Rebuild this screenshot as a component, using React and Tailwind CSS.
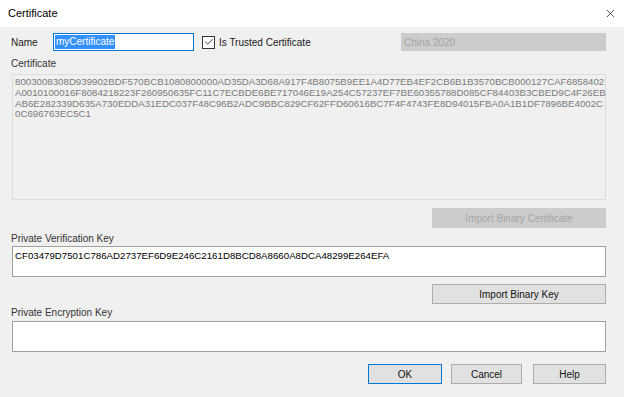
import { Check, ChevronDown, X } from "lucide-react"

const certLines = [
  "8003008308D939902BDF570BCB1080800000AD35DA3D68A917F4B8075B9EE1A4D77EB4EF2CB6B1B3570BCB000127CAF6858402",
  "A0010100016F8084218223F260950635FC11C7ECBDE6BE717046E19A254C57237EF7BE60355788D085CF84403B3CBED9C4F26EB",
  "AB6E282339D635A730EDDA31EDC037F48C96B2ADC9BBC829CF62FFD60616BC7F4F4743FE8D94015FBA0A1B1DF7896BE4002C",
  "0C696763EC5C1",
]

function Btn({ children, disabled, primary, className = "" }) {
  return (
    <button
      className={`flex h-[20px] items-center justify-center text-[10px] ${
        disabled
          ? "border border-[#cccccc] bg-[#cccccc] text-[#a6a6a6]"
          : primary
          ? "border border-[#0078d7] bg-[#e1e1e1] text-[#111]"
          : "border border-[#adadad] bg-[#e1e1e1] text-[#111]"
      } ${className}`}
    >
      {children}
    </button>
  )
}

export default function App() {
  return (
    <div
      className="flex h-[397px] w-[624px] flex-col overflow-hidden bg-[#f0f0f0] text-[10px] text-[#1a1a1a]"
      style={{ fontFamily: '"Liberation Sans", Arial, sans-serif' }}
    >
      {/* Title bar */}
      <div className="flex h-[27px] shrink-0 items-center justify-between bg-white pl-[8px] pr-[7px]">
        <span className="text-[11px] text-black">Certificate</span>
        <X className="h-[13px] w-[13px] text-[#222]" strokeWidth={1.4} />
      </div>

      <div className="flex flex-col pl-[12px] pr-[18px]">
        {/* Name row */}
        <div className="mt-[6px] flex h-[18px] items-center">
          <span className="-ml-[1px] w-[42px]">Name</span>
          <div className="flex h-[18px] w-[141px] items-center border border-[#0078d7] bg-white px-[1px]">
            <span className="bg-[#3390ff] px-[1px] leading-[14px] text-white">myCertificate</span>
          </div>
          <div className="ml-[8px] flex h-[13px] w-[13px] items-center justify-center border border-[#333] bg-white">
            <Check className="h-[10px] w-[10px] text-[#222]" strokeWidth={2.2} />
          </div>
          <span className="ml-[4px]">Is Trusted Certificate</span>
          <div className="ml-auto flex h-[18px] w-[205px] items-center justify-between bg-[#cccccc] pl-[3px] pr-[4px] text-[#a3a3a3]">
            <span>China 2020</span>
            <ChevronDown className="h-[9px] w-[9px] text-[#b8b8b8]" strokeWidth={2} />
          </div>
        </div>

        {/* Certificate */}
        <span className="-ml-[1px] mt-[7px] leading-[12px] text-[#333]">Certificate</span>
        <div className="mt-[4px] h-[126px] border border-[#dcdcdc] bg-[#f0f0f0] px-[2px] pt-[2px] text-[9.7px] leading-[10.8px] text-[#7a7a7a]">
          {certLines.map((l) => (
            <div key={l} className="whitespace-nowrap">{l}</div>
          ))}
        </div>
        <div className="mt-[8px] flex justify-end">
          <Btn disabled className="w-[174px]">Import Binary Certificate</Btn>
        </div>

        {/* Private Verification Key */}
        <span className="-ml-[1px] mt-[5px] leading-[12px] text-[#333]">Private Verification Key</span>
        <div className="mt-[1px] h-[31px] border border-[#a0a0a0] bg-white px-[2px] pt-[3px] text-[9.7px] leading-[11px] text-black">
          CF03479D7501C786AD2737EF6D9E246C2161D8BCD8A8660A8DCA48299E264EFA
        </div>
        <div className="mt-[7px] flex justify-end">
          <Btn className="w-[174px]">Import Binary Key</Btn>
        </div>

        {/* Private Encryption Key */}
        <span className="-ml-[1px] mt-[3px] leading-[12px] text-[#333]">Private Encryption Key</span>
        <div className="mt-[2px] h-[31px] border border-[#a0a0a0] bg-white" />

        {/* Dialog buttons */}
        <div className="mt-[12px] flex justify-end gap-[9px]">
          <Btn primary className="w-[74px]">OK</Btn>
          <Btn className="w-[71px]">Cancel</Btn>
          <Btn className="ml-[2px] w-[73px]">Help</Btn>
        </div>
      </div>
    </div>
  )
}
